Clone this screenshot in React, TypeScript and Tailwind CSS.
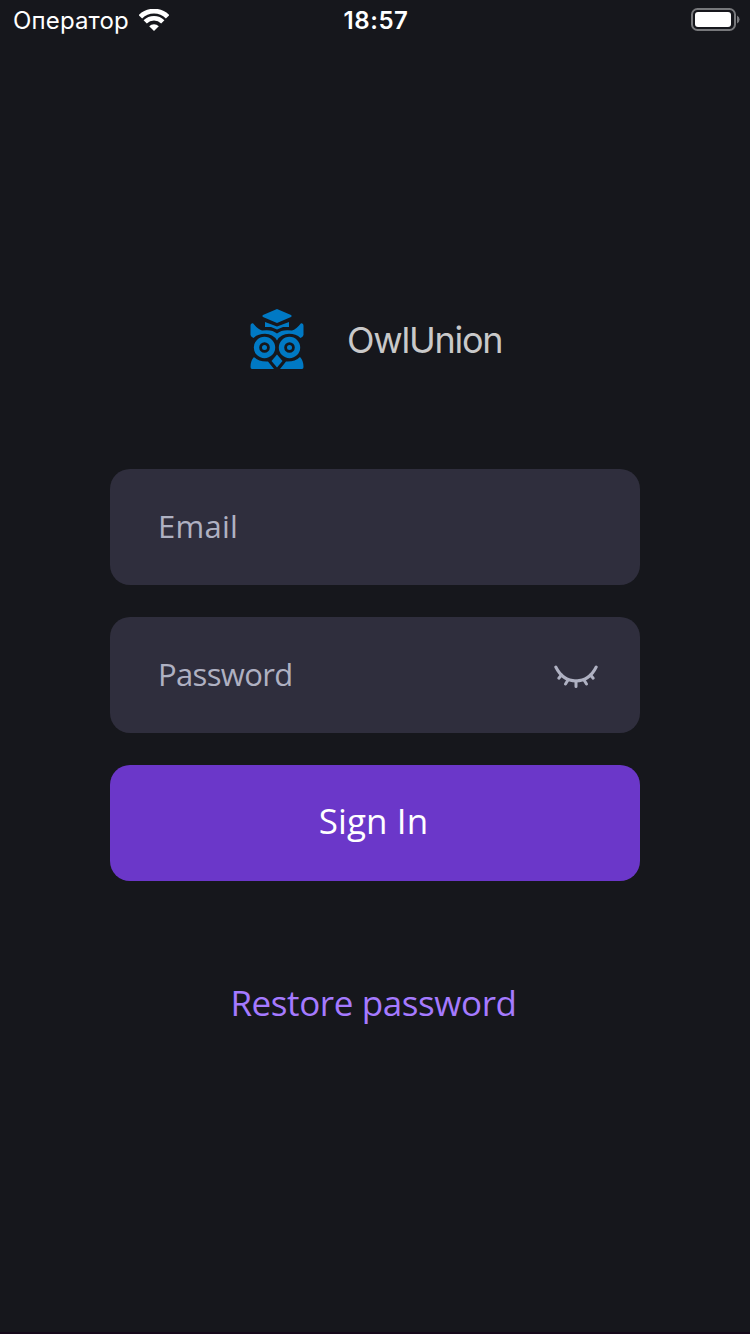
function WifiIcon() {
  return (
    <svg className="-mt-[2px] h-[22px] w-[30px]" viewBox="0 0 30 22" fill="none" stroke="white">
      <path d="M1.400 7.800 A19.200 19.200 0 0 1 28.600 7.800" strokeWidth="4.900" />
      <path d="M6.200 12.900 A12.500 12.500 0 0 1 23.800 12.900" strokeWidth="4.600" />
      <path d="M10.200 17.200 A6.800 6.800 0 0 1 19.800 17.200 L15 22 Z" fill="white" stroke="none" />
    </svg>
  );
}

function BatteryIcon() {
  return (
    <svg className="h-[23px] w-[49px]" viewBox="0 0 49 23" fill="none">
      <rect x="1" y="1" width="43" height="21" rx="5.5" stroke="#77787b" strokeWidth="2" />
      <rect x="4" y="4" width="36" height="15" rx="3" fill="white" />
      <path d="M46 7.5 Q48.6 9 48.6 11.5 Q48.6 14 46 15.5 Z" fill="#77787b" />
    </svg>
  );
}

function OwlLogo() {
  return (
    <svg className="h-[61px] w-[54px] shrink-0" viewBox="0 0 54 61" fill="#0079c4">
      <path d="M27 0 L41 6 Q42.500 7 41 8 L27 14 L13 8 Q11.500 7 13 6 Z" />
      <path d="M15 13 L27 17.500 L39 13 V18 H33 L27 20.500 L21 18 H15 Z" />
      <path d="M3 14.200 Q8 20.500 12 21.500 Q22 20 27 24.500 Q32 20 42 21.500 Q46 20.500 51 14.200 Q53.500 14 53.500 17 V26 Q53 28 50.500 29 Q46 24.800 39 24.800 Q31 24.800 27 31.500 Q23 24.800 15 24.800 Q8 24.800 3.500 29 Q1 28 .5 26 V17 Q.5 14 3 14.200 Z" />
      <g fill="none" stroke="#0079c4">
        <circle cx="14.500" cy="38.500" r="8" strokeWidth="5.400" />
        <circle cx="39.500" cy="38.500" r="8" strokeWidth="5.400" />
      </g>
      <circle cx="14.500" cy="38.500" r="2.500" />
      <circle cx="39.500" cy="38.500" r="2.500" />
      <path d="M27 45.500 L32.500 52 L27 58.500 L21.500 52 Z" />
      <path d="M4 48 Q9 53 18 52.500 L24 60 H2 Q.5 60 .5 58 Q.5 51.500 4 48 Z" />
      <path d="M50 48 Q45 53 36 52.500 L30 60 H52 Q53.500 60 53.500 58 Q53.500 51.500 50 48 Z" />
    </svg>
  );
}

function ClosedEyeIcon() {
  return (
    <svg className="mt-[3px] h-[24px] w-[44px]" viewBox="0 0 44 24" fill="none" stroke="#afb1c2" strokeWidth="3" strokeLinecap="round">
      <path d="M1.800 2 C11 20.500 33 20.500 42.200 2" />
      <path d="M7.500 10 L4.800 13.200 M14 15 L11.500 19 M22 16 V21.500 M30 15 L32.500 19 M36.500 10 L39.200 13.200" />
    </svg>
  );
}

export default function App() {
  return (
    <div className="flex h-[1334px] w-[750px] flex-col items-center border-b-2 border-[#15091a] bg-[#16171c] font-['Open_Sans',sans-serif]">
      <header className="grid h-10 w-full grid-cols-3 items-center pl-[13px] pr-[10px] font-['Inter',sans-serif] text-white">
        <div className="flex items-center gap-[10px]">
          <span className="pt-px text-[24px] leading-10 tracking-[0.15px]">Оператор</span>
          <WifiIcon />
        </div>
        <span className="pr-px pt-px text-center text-[24px] font-semibold leading-10 tracking-[0.6px]">18:57</span>
        <div className="flex justify-end pb-[3px]">
          <BatteryIcon />
        </div>
      </header>

      <main className="flex w-[530px] flex-col items-center pt-[269px]">
        <div className="flex h-[61px] w-full items-center pl-[140px]">
          <OwlLogo />
          <h1 className="ml-[43px] whitespace-nowrap pt-px font-['Inter',sans-serif] text-[36px] font-normal leading-[61px] tracking-[-1.25px] text-[#c9c9c9]">
            OwlUnion
          </h1>
        </div>

        <div className="mt-[99px] flex w-full flex-col gap-8">
          <div className="flex h-[116px] items-center rounded-[20px] bg-[#2f2e3d] pl-12 text-[31px] text-[#afb1c2]">
            <span className="pb-px tracking-[0.25px]">Email</span>
          </div>
          <div className="flex h-[116px] items-center justify-between rounded-[20px] bg-[#2f2e3d] pl-12 pr-[42px] text-[31px] text-[#afb1c2]">
            <span className="pb-px tracking-[-0.65px]">Password</span>
            <ClosedEyeIcon />
          </div>
          <button className="h-[116px] rounded-[20px] bg-[#6b37c9] pb-[3px] pr-[3px] text-[35px] tracking-[0.1px] text-white">
            Sign In
          </button>
        </div>

        <a className="mt-[96px] whitespace-nowrap pr-[3px] text-[35px] leading-[52px] tracking-[-0.4px] text-[#a57aff]">Restore password</a>
      </main>
    </div>
  );
}
